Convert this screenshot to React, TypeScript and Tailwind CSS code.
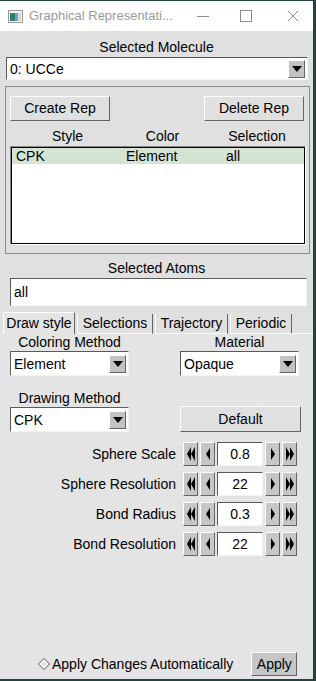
import React from 'react';

const raised = 'border border-t-white border-l-white border-r-[#646464] border-b-[#646464]';
const sunken = 'border border-t-[#5a5a5a] border-l-[#5a5a5a] border-r-[#f4f4f4] border-b-[#f4f4f4]';

const DownArrow: React.FC = () => (
  <svg width="10" height="6" viewBox="0 0 10 6">
    <path d="M0 0 H10 L5 6 Z" fill="#000" />
  </svg>
);

const Dropdown: React.FC<{ value: string; className: string }> = ({ value, className }) => (
  <div className={`flex items-center bg-white ${sunken} ${className}`}>
    <div className="flex-1 pl-[3px] text-[14px] leading-none text-black">{value}</div>
    <div className={`mr-[2px] flex h-[18px] w-[17px] items-center justify-center bg-[#c3c3c3] ${raised}`}>
      <DownArrow />
    </div>
  </div>
);

const Arrow: React.FC<{ dir: 'l' | 'r'; double?: boolean }> = ({ dir, double }) => (
  <svg width="10" height="14" viewBox="0 0 10 14">
    {dir === 'l' ? (
      double ? (
        <path d="M1 7 L5 0 V14 Z M5 7 L9 0 V14 Z" fill="#000" />
      ) : (
        <path d="M3 7 L7 1 V13 Z" fill="#000" />
      )
    ) : double ? (
      <path d="M1 0 L5 7 L1 14 Z M5 0 L9 7 L5 14 Z" fill="#000" />
    ) : (
      <path d="M3 1 L7 7 L3 13 Z" fill="#000" />
    )}
  </svg>
);

const SpinBtn: React.FC<{ children: React.ReactNode }> = ({ children }) => (
  <div className={`flex h-[24px] w-[15px] items-center justify-center bg-[#c6c6c6] ${raised}`}>{children}</div>
);

const Spinner: React.FC<{ label: string; value: string }> = ({ label, value }) => (
  <div className="flex h-[24px] items-center">
    <div className="w-[183px] pr-[7px] text-right text-[14px] text-black">{label}</div>
    <div className="flex gap-[2px]">
      <SpinBtn><Arrow dir="l" double /></SpinBtn>
      <SpinBtn><Arrow dir="l" /></SpinBtn>
      <div className={`flex h-[24px] w-[46px] items-center justify-center bg-white text-[14px] text-black ${sunken}`}>
        {value}
      </div>
      <SpinBtn><Arrow dir="r" /></SpinBtn>
      <SpinBtn><Arrow dir="r" double /></SpinBtn>
    </div>
  </div>
);

const tabs = [
  { name: 'Draw style', w: 'w-[72px]' },
  { name: 'Selections', w: 'w-[76px]' },
  { name: 'Trajectory', w: 'w-[73px]' },
  { name: 'Periodic', w: 'w-[62px]' },
];

export default function App() {
  return (
    <div className="h-[681px] w-[316px] bg-[#26443f] pt-[1px]" style={{ fontFamily: '"Liberation Sans", Arial, sans-serif' }}>
      <div className="flex h-[678px] w-[313px] flex-col bg-[#e0e0e0]">
        {/* title bar */}
        <div className="flex h-[30px] items-center bg-white">
          <svg className="ml-[8px]" width="15" height="13" viewBox="0 0 15 13">
            <rect x="0.5" y="0.5" width="14" height="12" fill="#f2f2f2" stroke="#9c9c9c" />
            <rect x="2" y="3" width="5" height="8" fill="#2f7d6b" />
            <rect x="7" y="3" width="3" height="8" fill="#6aa6c9" />
            <rect x="10" y="3" width="3" height="8" fill="#d8d8d8" />
          </svg>
          <span className="ml-[6px] text-[13px] text-[#9a9a9a]">Graphical Representati...</span>
          <div className="ml-auto flex items-center">
            <svg width="46" height="30" viewBox="0 0 46 30"><path d="M22 15.5 H34" stroke="#8c8c8c" /></svg>
            <svg width="46" height="30" viewBox="0 0 46 30"><rect x="19.5" y="9.5" width="11" height="11" fill="none" stroke="#8c8c8c" /></svg>
            <svg width="46" height="30" viewBox="0 0 46 30"><path d="M21 10 L31 20 M31 10 L21 20" stroke="#8c8c8c" /></svg>
          </div>
        </div>

        {/* selected molecule */}
        <div className="pt-[8px] text-center text-[14px] leading-[16px] text-black">Selected Molecule</div>
        <Dropdown value="0: UCCe" className="ml-[6px] mt-[2px] h-[23px] w-[302px]" />

        {/* reps frame */}
        <div className="ml-[5px] mt-[6px] h-[168px] w-[305px] border border-[#8a8a8a] px-[4px] pt-[9px]">
          <div className="flex justify-between">
            <button className={`h-[25px] w-[100px] bg-[#e0e0e0] text-[14px] text-black ${raised}`}>Create Rep</button>
            <button className={`mr-[1px] h-[25px] w-[100px] bg-[#e0e0e0] text-[14px] text-black ${raised}`}>Delete Rep</button>
          </div>
          <div className="mt-[7px] flex text-[14px] leading-[16px] text-black">
            <div className="w-[115px] shrink-0 text-center">Style</div>
            <div className="w-[75px] shrink-0 text-center">Color</div>
            <div className="w-[114px] shrink-0 text-center">Selection</div>
          </div>
          <div className="mt-[2px] h-[99px] w-[296px] border border-t-[#8a8a8a] border-l-[#8a8a8a] border-r-white border-b-white">
            <div className="h-full border border-black bg-white">
              <div className="flex h-[16px] items-center bg-[#d5e3d5] text-[14px] text-black">
                <div className="w-[114px] pl-[4px]">CPK</div>
                <div className="w-[100px]">Element</div>
                <div>all</div>
              </div>
            </div>
          </div>
        </div>

        {/* selected atoms */}
        <div className="mt-[6px] text-center text-[14px] leading-[16px] text-black">Selected Atoms</div>
        <div className={`ml-[10px] mt-[2px] flex h-[28px] w-[297px] items-center bg-white pl-[3px] text-[14px] text-black ${sunken}`}>all</div>

        {/* tabs */}
        <div className="mt-[6px] flex h-[22px] items-end pl-[3px]">
          {tabs.map((t, i) => (
            <div
              key={t.name}
              className={
                i === 0
                  ? `flex h-[22px] ${t.w} items-center justify-center border-l border-r border-t border-l-white border-t-white border-r-[#646464] bg-[#e4e4e4] text-[14px] text-black`
                  : `ml-[2px] flex h-[20px] ${t.w} items-center justify-center border-b border-r border-l border-l-white border-r-[#646464] border-b-white text-[14px] text-black`
              }
            >
              {t.name}
            </div>
          ))}
          <div className="h-[1px] flex-1 bg-white" />
        </div>

        {/* panel */}
        <div className="flex flex-1 flex-col bg-[#e4e4e4]">
          <div className="flex">
            <div className="ml-[10px] flex w-[119px] flex-col items-center">
              <div className="text-[14px] leading-[16px] text-black">Coloring Method</div>
              <Dropdown value="Element" className="mt-[1px] h-[25px] w-[119px]" />
            </div>
            <div className="ml-[51px] flex w-[119px] flex-col items-center">
              <div className="text-[14px] leading-[16px] text-black">Material</div>
              <Dropdown value="Opaque" className="mt-[1px] h-[25px] w-[119px]" />
            </div>
          </div>

          <div className="mt-[14px] flex">
            <div className="ml-[10px] flex w-[119px] flex-col items-center">
              <div className="text-[14px] leading-[16px] text-black">Drawing Method</div>
              <Dropdown value="CPK" className="mt-[1px] h-[25px] w-[119px]" />
            </div>
            <div className="ml-[51px] flex items-end">
              <button className={`h-[26px] w-[121px] bg-[#e0e0e0] text-[14px] text-black ${raised}`}>Default</button>
            </div>
          </div>

          <div className="mt-[10px] flex flex-col gap-[6px]">
            <Spinner label="Sphere Scale" value="0.8" />
            <Spinner label="Sphere Resolution" value="22" />
            <Spinner label="Bond Radius" value="0.3" />
            <Spinner label="Bond Resolution" value="22" />
          </div>

          <div className="mb-[3px] mt-auto flex items-center">
            <svg className="ml-[38px]" width="12" height="12" viewBox="0 0 12 12">
              <path d="M6 0.5 L11.5 6 L6 11.5 L0.5 6 Z" fill="#ffffff" stroke="#555" />
              <path d="M6 3 L9 6 L6 9 L3 6 Z" fill="#e4e4e4" />
            </svg>
            <span className="ml-[2px] text-[14px] text-black">Apply Changes Automatically</span>
            <button className={`ml-[18px] h-[24px] w-[46px] bg-[#c6c6c6] text-[14px] text-black ${raised}`}>Apply</button>
          </div>
        </div>
      </div>
    </div>
  );
}
